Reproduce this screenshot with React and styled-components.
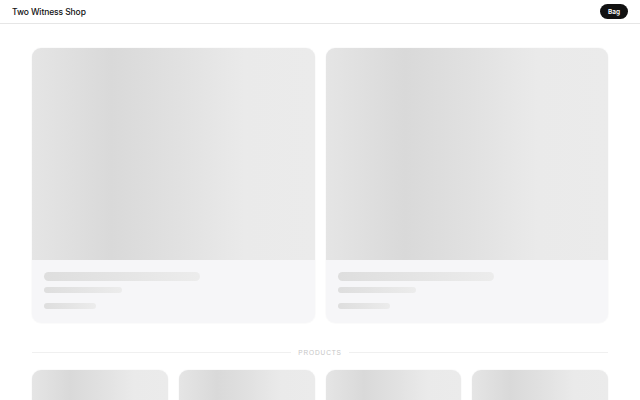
import React from 'react';
import styled, { createGlobalStyle } from 'styled-components';

const GlobalStyle = createGlobalStyle`
  * { box-sizing: border-box; }
  body {
    margin: 0;
    background: #ffffff;
    font-family: Inter, "Liberation Sans", Arial, sans-serif;
    color: #111;
  }
`;

const shimmer = `linear-gradient(90deg, #e5e5e5 0%, #d9d9d9 28%, #e1e1e1 52%, #eaeaea 75%, #ebebeb 100%)`;

const Header = styled.header`
  height: 24px;
  display: flex;
  align-items: center;
  justify-content: space-between;
  padding: 0 12px;
  border-bottom: 1px solid #e6e6e6;
`;

const Brand = styled.div`
  font-size: 8.5px;
  font-weight: 500;
  letter-spacing: -0.1px;
`;

const BagButton = styled.button`
  border: none;
  background: #111;
  color: #fff;
  font-family: inherit;
  font-size: 6.5px;
  font-weight: 600;
  height: 15px;
  padding: 0 8px;
  border-radius: 8px;
`;

const Main = styled.main`
  padding: 24px 32px;
`;

const Grid = styled.div`
  display: grid;
  grid-template-columns: repeat(${p => p.$cols}, 1fr);
  gap: 11px;
`;

const Card = styled.div`
  border-radius: 9px;
  overflow: hidden;
  background: #f6f6f8;
  box-shadow: 0 0 0 1px rgba(0, 0, 0, 0.015);
`;

const Media = styled.div`
  height: ${p => p.$h}px;
  background: ${shimmer};
`;

const Info = styled.div`
  padding: 12px 12px 14px;
  display: flex;
  flex-direction: column;
`;

const Line = styled.div`
  height: ${p => p.$h}px;
  width: ${p => p.$w}px;
  margin-top: ${p => p.$mt || 0}px;
  border-radius: ${p => p.$h / 2}px;
  background: linear-gradient(90deg, #dedede 0%, #e3e3e3 40%, #ececec 100%);
`;

const Divider = styled.div`
  display: flex;
  align-items: center;
  gap: 7px;
  margin: 26px 0 14px;
  color: #c6c6c6;
  font-family: "Liberation Sans", Arial, sans-serif;
  font-size: 6.5px;
  letter-spacing: 0.9px;
  text-transform: uppercase;

  &::before,
  &::after {
    content: '';
    flex: 1;
    height: 1px;
    background: #f0f0f0;
  }
`;

const HeroCard = () => (
  <Card>
    <Media $h={212} />
    <Info>
      <Line $h={9} $w={156} />
      <Line $h={6} $w={78} $mt={6} />
      <Line $h={6} $w={52} $mt={10} />
    </Info>
  </Card>
);

export default function App() {
  return (
    <>
      <GlobalStyle />
      <Header>
        <Brand>Two Witness Shop</Brand>
        <BagButton>Bag</BagButton>
      </Header>
      <Main>
        <Grid $cols={2}>
          <HeroCard />
          <HeroCard />
        </Grid>
        <Divider>Products</Divider>
        <Grid $cols={4}>
          {[0, 1, 2, 3].map(i => (
            <Card key={i}>
              <Media $h={140} />
            </Card>
          ))}
        </Grid>
      </Main>
    </>
  );
}
